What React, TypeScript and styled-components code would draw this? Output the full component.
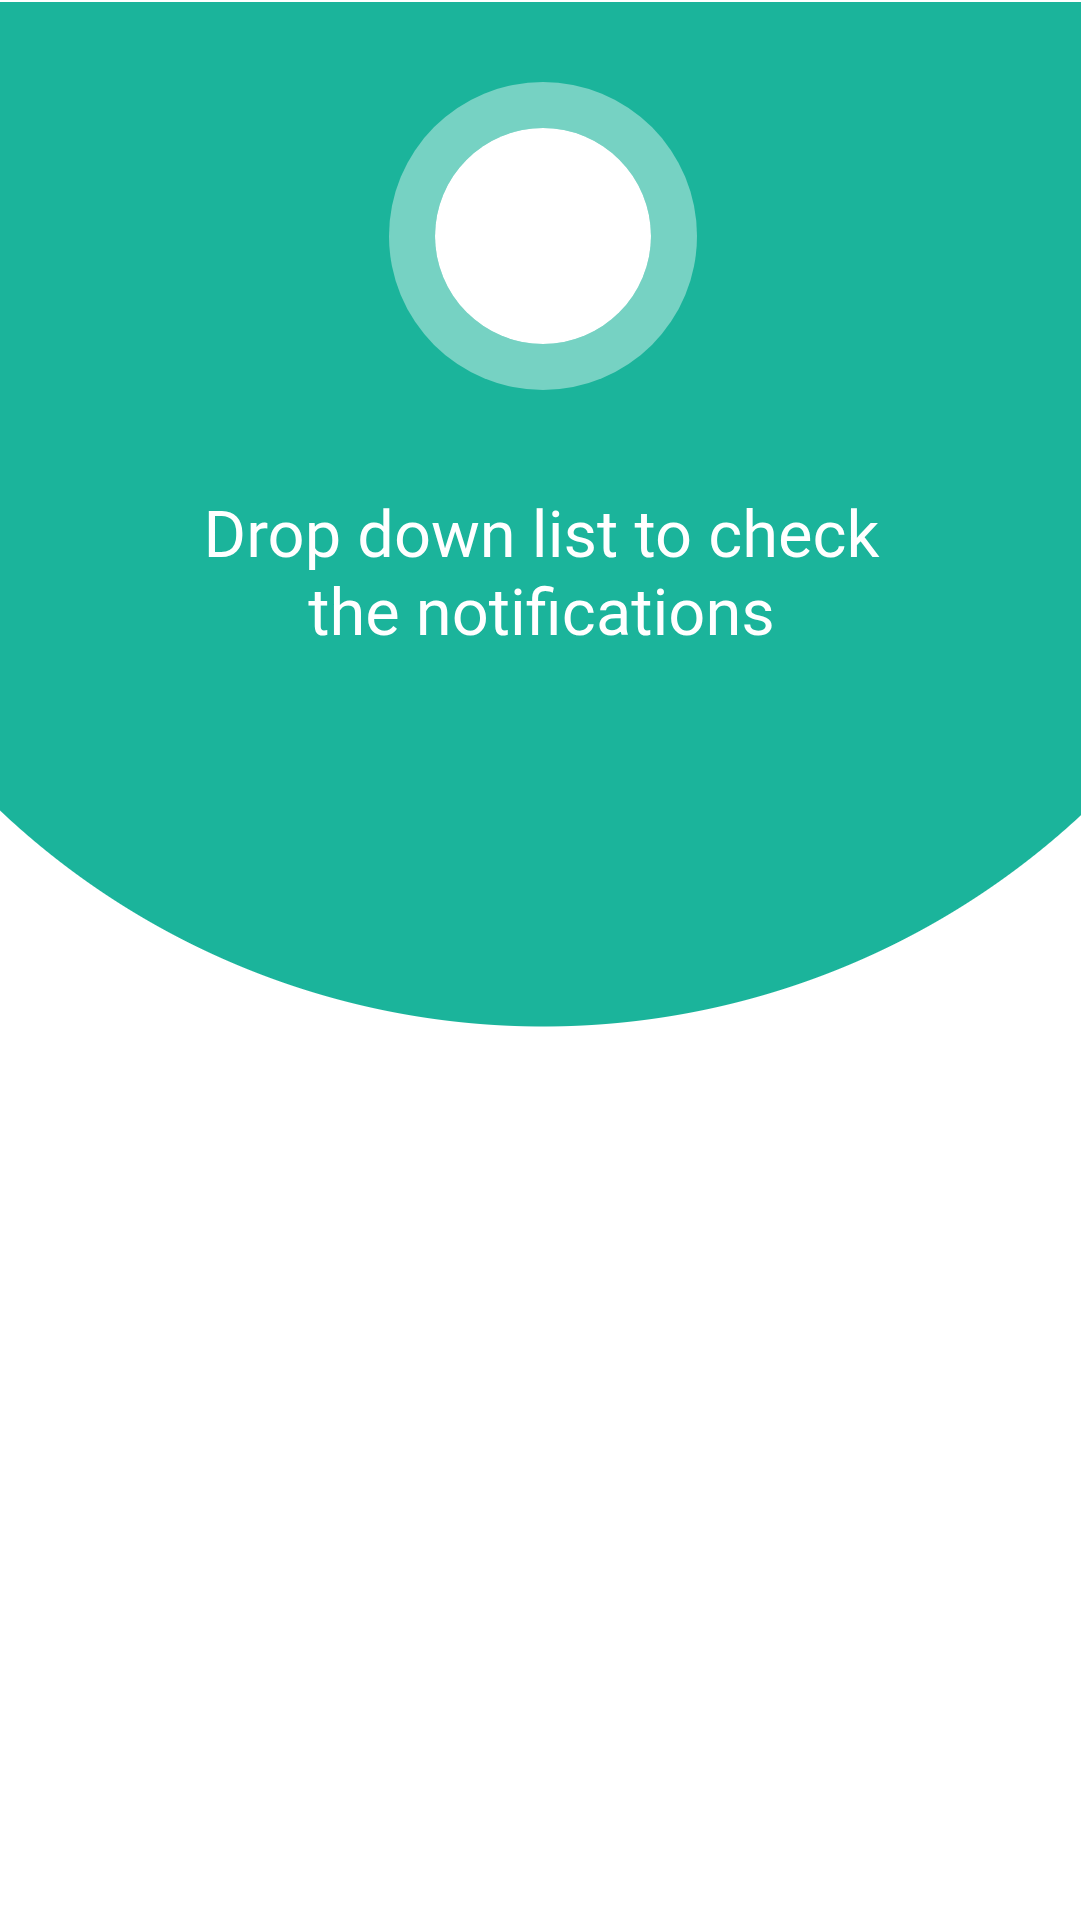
import React from "react";
import styled, { createGlobalStyle } from "styled-components";

const Global = createGlobalStyle`
  html, body { margin: 0; padding: 0; background: #ffffff; }
  body { font-family: Roboto, "Noto Sans", "Liberation Sans", sans-serif; }
`;

const Page = styled.div`
  width: 1081px;
  min-height: 1920px;
  padding-top: 2px;
  box-sizing: border-box;
  background: #ffffff;
  overflow: hidden;
`;

const Hero = styled.section`
  width: 1081px;
  height: 1025px;
  background: radial-gradient(
    circle 791px at 543px 234px,
    #1bb49b 790px,
    rgba(27, 180, 155, 0) 791px
  );
  display: flex;
  flex-direction: column;
  align-items: center;
`;

const RingWrap = styled.div`
  padding-top: 80px;
  padding-left: 5px;
  display: flex;
  justify-content: center;
`;

const Ring = styled.div`
  width: 216px;
  height: 216px;
  border-radius: 50%;
  border: 46px solid rgba(255, 255, 255, 0.4);
  background: #ffffff;
  background-clip: padding-box;
`;

const Message = styled.h1`
  margin: 106px 0 0;
  padding-left: 2px;
  font-family: Roboto, "Noto Sans", "Liberation Sans", sans-serif;
  font-weight: 400;
  font-size: 65px;
  line-height: 78px;
  color: #ffffff;
  text-align: center;
`;

export default function App() {
  return (
    <Page>
      <Global />
      <Hero>
        <RingWrap>
          <Ring />
        </RingWrap>
        <Message>
          Drop down list to check
          <br />
          the notifications
        </Message>
      </Hero>
    </Page>
  );
}
